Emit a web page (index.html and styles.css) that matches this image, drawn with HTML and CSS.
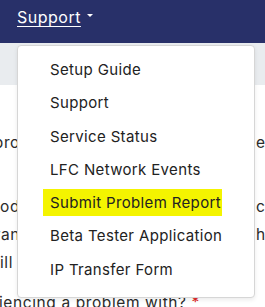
FILE: index.html
```html
<!DOCTYPE html>
<html lang="en">
<head>
    <meta charset="UTF-8">
    <meta name="viewport" content="width=device-width, initial-scale=1.0">
    <title>Support</title>
    <link rel="stylesheet" href="styles.css">
</head>
<body>
    <nav class="navbar">
        <a href="#" class="nav-link">Support</a>
        <span class="caret"></span>
    </nav>
    <div class="subbar"></div>

    <div class="content">
        <div class="line line-1"><span class="left">pro</span><span class="right">er</span></div>
        <div class="line line-2"><span class="left">od</span><span class="right">c</span></div>
        <div class="line line-3"><span class="left">ran</span><span class="right">he</span></div>
        <div class="line line-4"><span class="left">ill</span></div>
        <div class="line line-5"><span class="question">iencing a problem with? <span class="req">*</span></span></div>
    </div>

    <ul class="dropdown">
        <li><a href="#">Setup Guide</a></li>
        <li><a href="#">Support</a></li>
        <li><a href="#">Service Status</a></li>
        <li><a href="#">LFC Network Events</a></li>
        <li><a href="#"><span class="highlight">Submit Problem Report</span></a></li>
        <li><a href="#">Beta Tester Application</a></li>
        <li><a href="#">IP Transfer Form</a></li>
    </ul>
</body>
</html>
```

FILE: styles.css
```css
body {
    margin: 0;
    font-family: 'Inter', 'Noto Sans', sans-serif;
    background: #fff;
    color: #2b2b2b;
    width: 265px;
    height: 307px;
    overflow: hidden;
    position: relative;
}

.navbar {
    background: #283069;
    height: 43px;
    display: flex;
    align-items: center;
    padding-left: 17px;
    box-sizing: border-box;
}

.nav-link {
    color: #fff;
    font-size: 16px;
    letter-spacing: 0.5px;
    text-decoration: underline;
    text-underline-offset: 3px;
    margin-top: -9px;
}

.caret {
    width: 0;
    height: 0;
    border-left: 3px solid transparent;
    border-right: 3px solid transparent;
    border-top: 3px solid #fff;
    margin-left: 6px;
    margin-top: -12px;
}

.subbar {
    background: #e9ecef;
    height: 42px;
}

.content {
    font-size: 15.5px;
    letter-spacing: 0.6px;
}

.line {
    display: flex;
    height: 28px;
    line-height: 28px;
}

.line-1 {
    margin-top: 44px;
}

.line-2 {
    margin-top: 36px;
}

.left {
    width: 20px;
    flex: none;
    overflow: hidden;
    direction: rtl;
    text-align: right;
    white-space: nowrap;
}

.line-4 .left {
    width: 13px;
}

.right {
    margin-left: 236px;
    white-space: nowrap;
}

.line-5 {
    margin-top: 12px;
}

.question {
    margin-left: -1px;
    white-space: nowrap;
}

.req {
    color: #e02424;
}

.dropdown {
    position: absolute;
    top: 45px;
    left: 17px;
    width: 238px;
    box-sizing: border-box;
    margin: 0;
    padding: 7px 0 11px;
    list-style: none;
    background: #fff;
    border: 1px solid #d6d6d6;
    border-radius: 4px;
    box-shadow: 0 2px 4px rgba(0, 0, 0, 0.08);
}

.dropdown li a {
    display: block;
    height: 33.3px;
    line-height: 33.3px;
    padding-left: 32px;
    color: #222;
    font-size: 15px;
    letter-spacing: 0.35px;
    text-decoration: none;
    white-space: nowrap;
}

.highlight {
    background: #f4f400;
    padding: 4px 1px 4px 7px;
    margin-left: -7px;
}
```
